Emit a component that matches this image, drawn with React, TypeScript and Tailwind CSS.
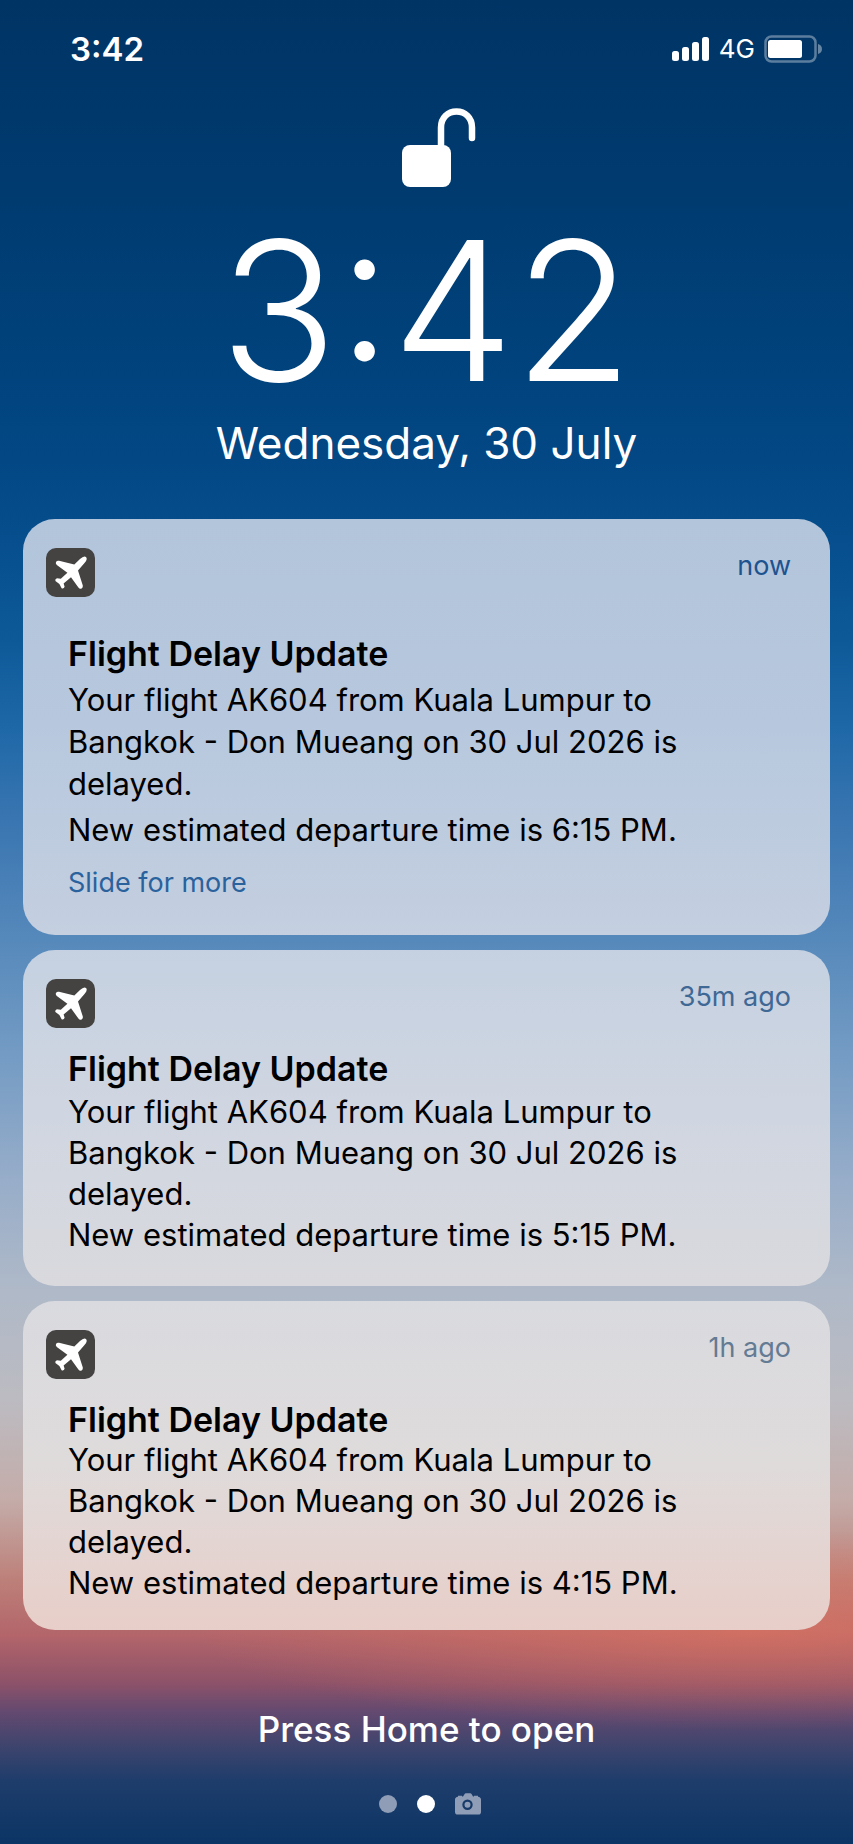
import React from 'react';

interface FlightNotification {
  id: string;
  age: string;
  ageClass: string;
  departure: string;
  cardClass: string;
  titleClass: string;
  textClass: string;
  newTimeClass: string;
  more?: boolean;
}

const notifications: FlightNotification[] = [
  {
    id: 'n1',
    age: 'now',
    ageClass: 'text-[#1d5390]',
    departure: '6:15 PM',
    cardClass: 'pb-[34px] bg-linear-to-b from-[#b3c5da] via-[#b7c8de] to-[#c4cfe0]',
    titleClass: 'mt-[38px]',
    textClass: 'mt-1.5 leading-[42px]',
    newTimeClass: 'mt-1',
    more: true,
  },
  {
    id: 'n2',
    age: '35m ago',
    ageClass: 'text-[#3f6895]',
    departure: '5:15 PM',
    cardClass: 'pb-[31px] bg-linear-to-b from-[#c5d1e1] via-[#d0d6e1] to-[#d9d9dd]',
    titleClass: 'mt-[22px]',
    textClass: 'mt-[3px] leading-[41px]',
    newTimeClass: '',
  },
  {
    id: 'n3',
    age: '1h ago',
    ageClass: 'text-[#647b94]',
    departure: '4:15 PM',
    cardClass: 'pb-[27px] bg-linear-to-b from-[#d9dadf] via-[#dfdbdb] to-[#e8cec8]',
    titleClass: 'mt-[22px]',
    textClass: 'leading-[41px]',
    newTimeClass: '',
  },
];

const PlaneIcon: React.FC = () => (
  <svg viewBox="0 0 49 49" className="size-[49px] shrink-0" aria-hidden="true">
    <rect width="49" height="49" rx="10" fill="#444342" />
    <path
      d="M34 11Q38 7.200 40 9Q42 11 38.500 15L32 22.500L36.800 37.500Q37.200 39.600 35.600 40.500Q33.600 41.200 32.400 39.500L25 29.300L17.600 35.600L18.600 38.800Q17.800 41 15.600 40.200L13.400 36L9.400 33Q8.800 31 11 30.200L14.800 30.800L21.400 24.800L10.800 17Q9.300 15.600 10 14Q11 12.400 13 12.800L28.300 16.600Z"
      fill="#fff"
    />
  </svg>
);

const UnlockIcon: React.FC = () => (
  <svg viewBox="0 0 74 80" className="h-20 w-[74px]" aria-hidden="true">
    <rect x="0" y="37" width="49" height="42" rx="8" fill="#fff" />
    <path d="M39 40V19.500C39 9.500 46 3.500 54.500 3.500S70 9.500 70 19.500V30" fill="none" stroke="#fff" strokeWidth="6.500" strokeLinecap="round" />
  </svg>
);

const SignalIcon: React.FC = () => (
  <svg viewBox="0 0 37 24" className="h-6 w-[37px]" fill="#fff" aria-hidden="true">
    <rect x="0" y="14" width="7" height="10" rx="2.500" />
    <rect x="10" y="10" width="7" height="14" rx="2.500" />
    <rect x="20" y="5" width="7" height="19" rx="2.500" />
    <rect x="30" y="0" width="7" height="24" rx="2.500" />
  </svg>
);

const BatteryIcon: React.FC = () => (
  <svg viewBox="0 0 58 28" className="h-7 w-[58px]" aria-hidden="true">
    <rect x="1.500" y="1.500" width="50" height="25" rx="6" fill="none" stroke="#fff" strokeOpacity=".36" strokeWidth="2.500" />
    <rect x="4" y="5" width="34" height="18" rx="2.500" fill="#fff" />
    <path d="M54 9c2.500.6 4 2.600 4 5s-1.500 4.400-4 5z" fill="#fff" fillOpacity=".4" />
  </svg>
);

const CameraIcon: React.FC = () => (
  <svg viewBox="0 0 26 22" className="h-[22px] w-[26px]" aria-hidden="true">
    <path
      fillRule="evenodd"
      d="M3 3.800V2.800h4v.7h1L9.500 1.200C10 .4 10.400.2 11 .2h4c.7 0 1.200.2 1.700 1l1.300 2.300h1v-.7h4v1c1.900.2 3 1.200 3 2.800V19c0 1.700-1 2.600-2.600 2.600H2.600C1 21.600 0 20.700 0 19V6.600c0-1.600 1.100-2.600 3-2.800zM12.500 6.500a5.200 5.200 0 1 0 0 10.400 5.200 5.200 0 0 0 0-10.400zm0 2.200a3 3 0 1 1 0 6 3 3 0 0 1 0-6z"
      fill="#8f9db7"
    />
  </svg>
);

const NotificationCard: React.FC<{ item: FlightNotification }> = ({ item }) => (
  <article className={`rounded-[32px] pt-[29px] pr-[39px] pl-[23px] text-black ${item.cardClass}`}>
    <div className="flex items-start justify-between">
      <PlaneIcon />
      <time className={`text-[27px] leading-9 ${item.ageClass}`}>{item.age}</time>
    </div>
    <div className="pl-[22px]">
      <h2 className={`text-[34px] leading-[38px] font-semibold ${item.titleClass}`}>Flight Delay Update</h2>
      <div className={`text-[31px] ${item.textClass}`}>
        <p className="max-w-[660px]">Your flight AK604 from Kuala Lumpur to Bangkok - Don Mueang on 30 Jul 2026 is delayed.</p>
        <p className={item.newTimeClass}>New estimated departure time is {item.departure}.</p>
      </div>
      {item.more && (
        <button type="button" className="mt-3.5 block text-[27px] leading-9 text-[#2a629d]">Slide for more</button>
      )}
    </div>
  </article>
);

const App: React.FC = () => {
  return (
    <main className="flex min-h-screen flex-col bg-[radial-gradient(ellipse_65%_100px_at_88%_1630px,rgba(228,118,94,0.6),rgba(228,118,94,0)),linear-gradient(to_bottom,#003465_0px,#003b70_200px,#01447f_400px,#054c8b_520px,#0d5998_640px,#1f68a8_730px,#3c77b2_830px,#5689bb_940px,#759cc4_1060px,#97adc9_1180px,#afb9c8_1290px,#bcbbc1_1400px,#c4aca9_1500px,#bd8079_1580px,#b3656a_1635px,#8d5269_1683px,#634970_1712px,#3c446d_1748px,#1f3d6b_1780px,#0b3565_1844px)] font-['Inter',sans-serif] text-white">
      <header className="flex items-center justify-between pt-[31px] pr-[31px] pl-[70px]">
        <span className="text-[33px] leading-9 font-semibold">3:42</span>
        <div className="flex items-center">
          <SignalIcon />
          <span className="mr-[9px] ml-[10px] text-[26px] leading-9">4G</span>
          <BatteryIcon />
        </div>
      </header>

      <section className="flex flex-col items-center pt-[41px]">
        <div className="pl-6">
          <UnlockIcon />
        </div>
        <h1 className="mt-[27px] text-[194px] leading-[192px] font-light">3:42</h1>
        <p className="mt-2 text-[44px] leading-[56px]">Wednesday, 30 July</p>
      </section>

      <section className="flex flex-col gap-[15px] px-[23px] pt-12">
        {notifications.map((n) => (
          <NotificationCard key={n.id} item={n} />
        ))}
      </section>

      <footer className="mt-auto flex flex-col items-center pb-[29px]">
        <button type="button" className="text-[35px] leading-[44px] font-medium">Press Home to open</button>
        <div className="mt-[42px] flex items-center gap-5 pl-[7px]">
          <span className="size-[18px] rounded-full bg-[#8f9db7]" />
          <span className="size-[18px] rounded-full bg-white" />
          <CameraIcon />
        </div>
      </footer>
    </main>
  );
};

export default App;
